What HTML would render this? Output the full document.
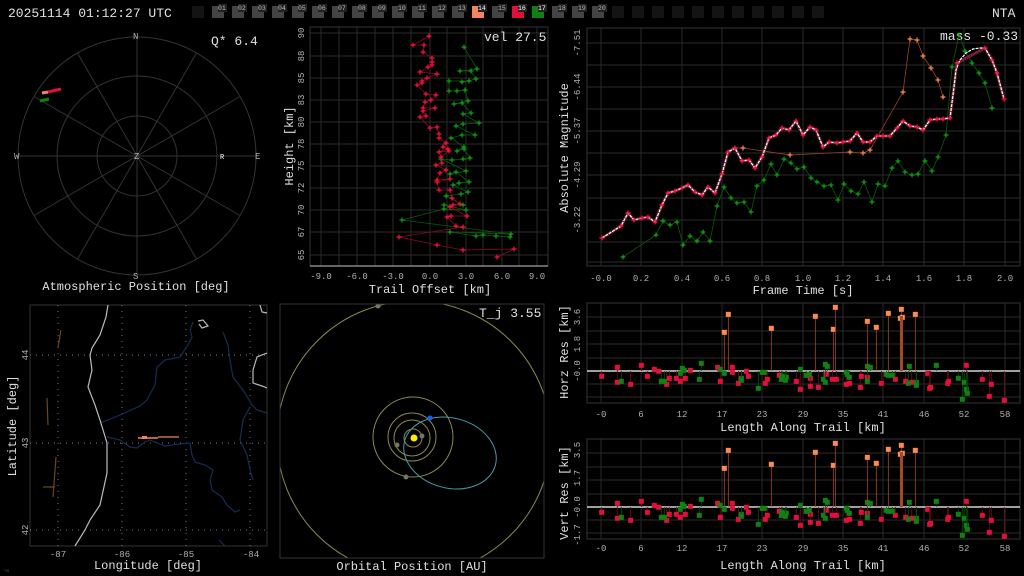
<!DOCTYPE html>
<html><head><meta charset="utf-8"><style>
html,body{margin:0;padding:0;background:#000;width:1024px;height:576px;overflow:hidden}
svg{display:block}
text{font-family:"Liberation Mono","DejaVu Sans Mono",monospace;fill:#e0e0e0}
.t{font-size:9px;fill:#b0b0b0}
.l{font-size:12px}
.g{stroke:#2a2a2a;stroke-width:1;fill:none}
.b{stroke:#333;fill:none}
</style></head><body>
<svg id="s" width="1024" height="576" viewBox="0 0 1024 576" xmlns="http://www.w3.org/2000/svg">
<rect width="1024" height="576" fill="#000"/>
<text x="8" y="17" style="font-size:13px">20251114 01:12:27 UTC</text>
<text x="992" y="17" style="font-size:13px">NTA</text>
<g id="bar"></g>

<g stroke="#333" fill="none">
<circle cx="137" cy="156" r="40"/><circle cx="137" cy="156" r="80"/><circle cx="137" cy="156" r="119"/>
<g id="spokes"></g>
</g>
<text x="133" y="39" class="t">N</text><text x="133" y="279" class="t">S</text>
<text x="14" y="159" class="t">W</text><text x="255" y="159" class="t">E</text>
<text x="134" y="159" class="t">Z</text><text x="220" y="159" style="font-size:7px;fill:#fff">R</text>
<text x="211" y="45" style="font-size:13px">Q*  6.4</text>
<line x1="42" y1="93" x2="48" y2="92" stroke="#f4845f" stroke-width="3"/>
<line x1="48" y1="92" x2="61" y2="89" stroke="#e0103a" stroke-width="3"/>
<line x1="40" y1="101" x2="49" y2="99" stroke="#108010" stroke-width="3"/>
<text x="136" y="290" text-anchor="middle" class="l">Atmospheric Position [deg]</text>

<g id="tgrid" class="g"></g>
<rect x="310" y="27" width="238" height="239" class="b"/>
<line x1="310" y1="266" x2="548" y2="266" stroke="#ccc"/>
<g id="tlab"></g>
<text x="484" y="41" style="font-size:13px">vel 27.5</text>
<text x="430" y="293" text-anchor="middle" class="l">Trail Offset [km]</text>
<text transform="translate(293,146) rotate(-90)" text-anchor="middle" class="l">Height [km]</text>
<g id="tdata"></g>

<g id="mgrid" class="g"></g>
<rect x="587" y="28" width="433" height="238" class="b"/>
<g id="mlab"></g>
<text x="940" y="40" style="font-size:13px">mass -0.33</text>
<text x="803" y="294" text-anchor="middle" class="l">Frame Time [s]</text>
<text transform="translate(568,148) rotate(-90)" text-anchor="middle" class="l">Absolute Magnitude</text>
<g id="mdata"></g>

<rect x="30" y="305" width="237" height="241" stroke="#333" fill="none"/>
<g stroke="#777" stroke-dasharray="1,5" fill="none">
<line x1="58" y1="305" x2="58" y2="546"/><line x1="122" y1="305" x2="122" y2="546"/><line x1="186" y1="305" x2="186" y2="546"/><line x1="250" y1="305" x2="250" y2="546"/>
<line x1="30" y1="355" x2="267" y2="355"/><line x1="30" y1="443" x2="267" y2="443"/><line x1="30" y1="530" x2="267" y2="530"/>
</g>
<g fill="none" stroke-width="1.2">
<polyline stroke="#152d55" points="100,423 120,415 140,406 147,400 155,385 157,367 165,360 180,357 188,345 192,337 190,330 193,322"/>
<polyline stroke="#152d55" points="107,437 120,440 130,447 137,448 145,442 150,440 165,446 180,444 190,443 192,455 195,462 205,465 213,470 210,480 212,490 222,497 227,505 235,512 240,510"/>
<polyline stroke="#152d55" points="223,332 228,345 230,360 233,377 245,393 252,405 257,410 267,413"/>
<polyline stroke="#152d55" points="250,407 243,420 240,440 247,455 250,470 253,480"/>
<polyline stroke="#152d55" points="219,540 225,546"/>
<polyline stroke="#bbb" points="108,305 106,317 100,335 92,348 90,355 92,370 88,387 95,405 100,420 107,443 107,473 100,505 90,520 85,530 75,546"/>
<polyline stroke="#bbb" points="267,353 257,357 253,370 253,383 262,386 267,388"/>
<polyline stroke="#bbb" points="260,305 262,312 267,313"/>
<polyline stroke="#bbb" points="198,321 203,320 208,326 202,328 199,324"/>
<polyline stroke="#6a4a1a" points="61,330 58,347"/>
<polyline stroke="#6a4a1a" points="47,398 48,425"/>
<polyline stroke="#6a4a1a" points="56,457 53,497"/>
<polyline stroke="#6a4a1a" points="43,487 55,487"/>
</g>
<line x1="138" y1="438" x2="158" y2="438" stroke="#f4845f" stroke-width="1.5"/>
<line x1="158" y1="437" x2="179" y2="437" stroke="#f4845f" stroke-width="1.2"/>
<rect x="142" y="436" width="5" height="3" fill="#f4845f"/>
<text x="58" y="557" text-anchor="middle" class="t">-87</text><text x="122" y="557" text-anchor="middle" class="t">-86</text>
<text x="186" y="557" text-anchor="middle" class="t">-85</text><text x="251" y="557" text-anchor="middle" class="t">-84</text>
<text transform="translate(28,355) rotate(-90)" text-anchor="middle" class="t">44</text>
<text transform="translate(28,443) rotate(-90)" text-anchor="middle" class="t">43</text>
<text transform="translate(28,530) rotate(-90)" text-anchor="middle" class="t">42</text>
<text x="148" y="569" text-anchor="middle" class="l">Longitude [deg]</text>
<text transform="translate(16,426) rotate(-90)" text-anchor="middle" class="l">Latitude [deg]</text>

<svg x="280" y="304" width="264" height="254" viewBox="280 304 264 254">
<g fill="none" stroke="#8a8a50">
<circle cx="414" cy="438" r="137"/>
<circle cx="413" cy="437" r="40"/>
<circle cx="412" cy="437" r="24"/>
<circle cx="412" cy="438" r="18"/>
<circle cx="413" cy="438" r="9"/>
</g>
<ellipse cx="450" cy="453" rx="47" ry="35" transform="rotate(15 450 453)" fill="none" stroke="#4a9aaa"/>
<circle cx="414" cy="438" r="3.5" fill="#ffee00"/>
<circle cx="422" cy="436" r="2.5" fill="#777760"/>
<circle cx="397" cy="445" r="2.5" fill="#777760"/>
<circle cx="406" cy="477" r="2.5" fill="#777760"/>
<circle cx="378" cy="306" r="2.5" fill="#777760"/>
<circle cx="430" cy="418" r="2.5" fill="#1060ff"/>
</svg>
<rect x="280" y="304" width="264" height="254" stroke="#333" fill="none"/>
<text x="479" y="317" style="font-size:13px">T_j 3.55</text>
<text x="412" y="570" text-anchor="middle" class="l">Orbital Position [AU]</text>

<g id="res"></g>
<text transform="translate(568,352) rotate(-90)" text-anchor="middle" class="l">Horz Res [km]</text>
<text transform="translate(568,493) rotate(-90)" text-anchor="middle" class="l">Vert Res [km]</text>
<text x="803" y="431" text-anchor="middle" class="l">Length Along Trail [km]</text>
<text x="803" y="569" text-anchor="middle" class="l">Length Along Trail [km]</text>
<text x="3" y="572" style="font-size:5px;fill:#444">~w</text>
</svg>
<script>
const NS="http://www.w3.org/2000/svg";
function el(p,t,a,txt){const e=document.createElementNS(NS,t);for(const k in a)e.setAttribute(k,a[k]);if(txt!=null)e.textContent=txt;document.getElementById(p).appendChild(e);return e;}
for(let i=0;i<32;i++){const x=192+i*20;let f="#141414";if(i>=1&&i<=20)f="#444";if(i==14)f="#f4845f";if(i==16)f="#e0103a";if(i==17)f="#108010";
el("bar","rect",{x:x,y:6,width:12,height:12,fill:f});
if(i>=1&&i<=20){el("bar","rect",{x:x+6,y:4,width:9,height:8,fill:"#222"});el("bar","text",{x:x+6,y:10,style:"font-size:6.5px;fill:"+((i==14||i==16||i==17)?"#fff":"#bbb")},String(i).padStart(2,"0"));}}
for(let a=0;a<360;a+=30){const r=a*Math.PI/180;el("spokes","line",{x1:137,y1:156,x2:137+119*Math.sin(r),y2:156-119*Math.cos(r)});}
const tx=[321,357,393,430,466,502,537],tl=["-9.0","-6.0","-3.0","0.0","3.0","6.0","9.0"];
tx.forEach((x,i)=>{el("tgrid","line",{x1:x,y1:27,x2:x,y2:266});el("tlab","text",{x:x,y:279,"text-anchor":"middle",class:"t"},tl[i]);});
for(let i=0;i<6;i++){el("tgrid","line",{x1:339+i*36,y1:27,x2:339+i*36,y2:266});}
const ty=[33,56,78,100,122,144,166,188,210,232,255],tyl=["90","88","85","83","80","78","75","72","70","67","65"];
ty.forEach((y,i)=>{el("tgrid","line",{x1:310,y1:y,x2:548,y2:y});el("tlab","text",{transform:`translate(304,${y}) rotate(-90)`,"text-anchor":"middle",class:"t"},tyl[i]);});
function plus(p,x,y,c,s){s=s||2.5;el(p,"path",{d:`M${x-s} ${y}H${x+s}M${x} ${y-s}V${y+s}`,stroke:c,"stroke-width":1.2});}
function series(p,pts,lc,mc,w){el(p,"polyline",{points:pts.map(q=>q.join(",")).join(" "),fill:"none",stroke:lc,"stroke-width":w||0.8});pts.forEach(q=>plus(p,q[0],q[1],mc));}
const tg=[[464,47],[477,69],[460,71],[471,71],[476,79],[462,82],[469,81],[449,81],[449,91],[457,91],[465,90],[468,101],[454,104],[462,103],[471,113],[463,114],[479,123],[463,124],[456,126],[475,135],[462,135],[451,138],[464,147],[457,151],[464,149],[470,158],[463,159],[452,160],[441,159],[466,171],[450,174],[456,172],[469,182],[459,183],[453,185],[468,192],[461,194],[446,196],[463,205],[444,205],[466,210],[444,209],[402,220],[511,234],[450,232],[476,236],[483,235],[496,236],[510,237]];
series("tdata",tg,"#0a5a0a","#10a010");
const tr=[[429,36],[413,45],[424,45],[423,52],[432,58],[432,62],[432,65],[428,67],[420,72],[437,74],[427,78],[422,81],[422,83],[417,85],[426,94],[436,95],[431,100],[425,102],[423,108],[435,108],[423,111],[426,116],[420,117],[430,128],[437,127],[439,134],[439,138],[446,143],[443,147],[448,149],[439,152],[449,151],[441,157],[442,163],[436,165],[446,170],[440,173],[437,180],[450,179],[437,182],[439,190],[450,190],[452,198],[460,204],[453,205],[450,207],[467,216],[451,216],[447,217],[456,226],[463,227],[399,237],[437,245],[463,250],[514,249],[497,257]];
series("tdata",tr,"#8a0a20","#ff1040");
const mx=[601,641,682,722,762,803,843,883,924,964,1005],ml=["-0.0","0.2","0.4","0.6","0.8","1.0","1.2","1.4","1.6","1.8","2.0"];
mx.forEach((x,i)=>{el("mgrid","line",{x1:x,y1:28,x2:x,y2:266});el("mlab","text",{x:x,y:281,"text-anchor":"middle",class:"t"},ml[i]);});
[43,65,87,109,131,153,175,198,220,242,262].forEach(y=>el("mgrid","line",{x1:587,y1:y,x2:1020,y2:y}));
[[43,"-7.51"],[87,"-6.44"],[131,"-5.37"],[175,"-4.29"],[220,"-3.22"]].forEach(a=>el("mlab","text",{transform:`translate(580,${a[0]}) rotate(-90)`,"text-anchor":"middle",class:"t"},a[1]));
const mg=[[623,257],[656,235],[663,221],[670,225],[677,222],[683,245],[690,236],[697,241],[703,232],[710,241],[717,206],[724,187],[731,198],[737,203],[744,202],[751,212],[757,186],[764,180],[771,164],[777,175],[784,159],[791,163],[797,169],[804,167],[811,178],[817,182],[824,186],[831,185],[838,200],[844,184],[851,191],[858,194],[864,182],[872,202],[878,184],[885,186],[892,168],[898,161],[905,172],[912,175],[918,174],[925,161],[932,171],[938,157],[946,135],[952,67],[959,35],[965,51],[972,63],[979,73],[985,83],[992,108]];
series("mdata",mg,"#0a5a0a","#10a010");
const mo=[[735,148],[743,148],[790,155],[850,152],[863,153],[870,150],[903,92],[910,39],[917,40],[923,56],[931,68],[938,80],[943,97]];
series("mdata",mo,"#a04020","#ff8a50");
const mr=[[602,238],[621,226],[628,213],[634,220],[642,218],[648,217],[655,222],[662,205],[668,193],[675,191],[682,188],[688,185],[695,192],[702,195],[708,187],[715,193],[722,174],[728,152],[735,148],[742,161],[749,160],[755,168],[762,157],[769,138],[776,135],[782,128],[789,130],[796,121],[803,135],[810,127],[816,130],[823,147],[829,142],[837,143],[843,142],[850,141],[857,133],[863,142],[870,142],[877,136],[883,136],[890,136],[897,128],[903,121],[910,126],[917,127],[923,130],[930,120],[937,119],[943,119],[950,118],[957,63],[985,48],[992,60],[997,73],[1004,99]];
el("mdata","polyline",{points:mr.map(q=>q.join(",")).join(" "),fill:"none",stroke:"#702030","stroke-width":3});
const wc=mr.slice(0,51).concat([[953,95],[956,70],[960,60],[966,53],[973,49],[980,48],[985,48],[992,60],[997,73],[1004,99]]);
el("mdata","polyline",{points:wc.map(q=>q.join(",")).join(" "),fill:"none",stroke:"#fff","stroke-width":1.2,"stroke-dasharray":"3,1"});
mr.forEach(q=>plus("mdata",q[0],q[1],"#ff1040"));
const red=[[140,229],[187,202],[187,247],[227,253],[259,196],[277,229],[298,208],[311,214],[335,253],[343,235],[364,235],[376,244],[391,235],[406,211],[488,202],[496,244],[532,202],[532,217],[550,250],[574,214],[580,229],[631,250],[637,238],[673,226],[724,244],[736,268],[766,235],[766,259],[790,262],[814,223],[832,238],[844,238],[874,253],[884,250],[916,262],[919,229],[937,232],[979,250],[1021,238],[1052,244],[1070,247],[1118,220],[1124,265],[1127,262],[1178,250],[1181,244],[1282,238],[1303,289],[1309,253],[1348,301],[1234,196]];
const org=[[508,97],[520,43],[649,85],[781,49],[835,88],[841,22],[937,64],[964,82],[1000,40],[1036,55],[1039,28],[1042,52],[1081,43]];
const grn=[[199,244],[319,244],[328,244],[376,220],[382,205],[388,211],[433,238],[439,190],[496,208],[508,220],[559,235],[559,241],[610,265],[622,217],[628,217],[679,238],[682,229],[694,232],[691,241],[736,208],[754,226],[763,223],[805,238],[811,193],[811,247],[817,199],[874,217],[877,223],[883,232],[937,199],[937,244],[946,202],[994,223],[1000,226],[1012,226],[1060,250],[1063,199],[1084,247],[1084,256],[1144,196],[1210,235],[1222,298],[1228,247],[1234,268],[1237,280]];
const xl=["-0","6","12","17","23","29","35","41","46","52","58"];
function panel(off,yl){
 const top=303+off,bot=403+off,z=371+off;
 mx.forEach((x,i)=>{el("res","line",{x1:x,y1:top,x2:x,y2:bot,class:"g"});el("res","text",{x:x,y:417+off+(off?-2:0),"text-anchor":"middle",class:"t"},xl[i]);});
 [317,331,344,358,384,397].forEach(y=>el("res","line",{x1:587,y1:y+off,x2:1020,y2:y+off,class:"g"}));
 yl.forEach(a=>el("res","text",{transform:`translate(580,${a[0]+off}) rotate(-90)`,"text-anchor":"middle",class:"t"},a[1]));
 el("res","rect",{x:587,y:top,width:433,height:100,class:"b"});
 el("res","line",{x1:587,y1:z,x2:1020,y2:z,stroke:"#fff","stroke-width":1.2});
 const cv=(q)=>[q[0]/3+555,q[1]/3+300+off];
 function sq(list,c,lc){list.forEach(q=>{const p=cv(q);el("res","line",{x1:p[0],y1:z,x2:p[0],y2:p[1],stroke:lc,"stroke-width":0.8});el("res","rect",{x:p[0]-2.5,y:p[1]-2.5,width:5,height:5,fill:c});});}
 sq(red,"#e0103a","#700818");sq(grn,"#108010","#0a4a0a");sq(org,"#ff8a50","#a04828");
 el("res","rect",{x:900,y:316+off,width:3,height:55,fill:"#a04828"});
}
panel(0,[[317,"3.6"],[344,"1.8"],[371,"-0.0"]]);
panel(136,[[314,"3.5"],[342,"1.7"],[371,"-0.0"],[399,"-1.7"]]);
</script>
</body></html>
